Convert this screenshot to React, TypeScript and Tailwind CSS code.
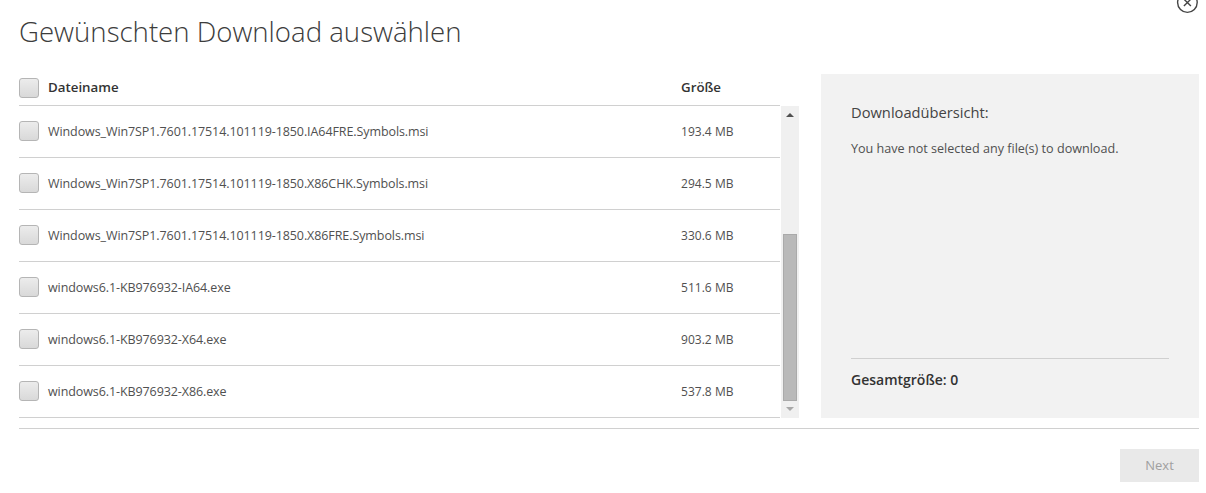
const files = [
  { name: "Windows_Win7SP1.7601.17514.101119-1850.IA64FRE.Symbols.msi", size: "193.4 MB" },
  { name: "Windows_Win7SP1.7601.17514.101119-1850.X86CHK.Symbols.msi", size: "294.5 MB" },
  { name: "Windows_Win7SP1.7601.17514.101119-1850.X86FRE.Symbols.msi", size: "330.6 MB" },
  { name: "windows6.1-KB976932-IA64.exe", size: "511.6 MB" },
  { name: "windows6.1-KB976932-X64.exe", size: "903.2 MB" },
  { name: "windows6.1-KB976932-X86.exe", size: "537.8 MB" },
];

function Box() {
  return (
    <span className="block h-[20px] w-[20px] shrink-0 rounded-[3px] border border-[#b5b5b5] bg-gradient-to-b from-[#ececec] to-[#d9d9d9]" />
  );
}

export default function App() {
  return (
    <div className="relative h-[493px] w-[1206px] overflow-hidden bg-white pl-[19px] pr-[7px] font-['Open_Sans',sans-serif] text-[#505050]">
      <svg className="absolute left-[1176px] top-[-8px]" width="23" height="22" viewBox="0 0 23 22" fill="none" stroke="#444" strokeWidth="1.4">
        <circle cx="11.4" cy="10.6" r="9.8" />
        <path d="M7.9 7.1l7 7M14.9 7.1l-7 7" />
      </svg>

      <h1 className="h-[74px] pt-[10px] text-[27.6px] font-light leading-[42px] text-[#3c3c3c]">
        Gewünschten Download auswählen
      </h1>

      <div className="flex h-[344px] gap-[22px]">
        <div className="w-[780px]">
          <div className="flex h-[32px] w-[761px] items-center border-b border-[#d0d0d0] pb-[3px] text-[13.3px] font-semibold text-[#333]">
            <Box />
            <span className="ml-[9px] w-[633px]">Dateiname</span>
            <span>Größe</span>
          </div>
          <div className="flex h-[312px]">
            <ul className="w-[761px]">
              {files.map((file) => (
                <li key={file.name} className="flex h-[52px] items-center border-b border-[#d0d0d0] pb-px text-[12.5px]">
                  <Box />
                  <span className="ml-[9px] w-[633px] pt-[2px] tracking-[-0.09px]">{file.name}</span>
                  <span className="pt-px text-[12px] tracking-[0.03px]">{file.size}</span>
                </li>
              ))}
            </ul>
            <div className="ml-px flex w-[18px] flex-col items-center bg-[#f0f0f0]">
              <span className="mt-[7px] h-0 w-0 border-x-[4px] border-b-[4px] border-x-transparent border-b-[#505050]" />
              <span className="mt-[117px] h-[167px] w-[14px] border border-[#aaaaaa] bg-[#b9b9b9]" />
              <span className="mt-[6px] h-0 w-0 border-x-[4px] border-t-[4px] border-x-transparent border-t-[#a8a8a8]" />
            </div>
          </div>
        </div>

        <aside className="flex w-[378px] flex-col bg-[#f2f2f2] px-[30px] pt-[27px]">
          <h2 className="text-[14.7px] leading-[22px] text-[#444]">Downloadübersicht:</h2>
          <p className="mt-[17px] text-[12.6px] leading-[18px]">You have not selected any file(s) to download.</p>
          <div className="mt-auto mb-[27px] border-t border-[#d0d0d0] pb-px pt-[11px] text-[14px] font-semibold leading-[20px] text-[#333]">
            Gesamtgröße: 0
          </div>
        </aside>
      </div>

      <div className="mt-[10px] border-t border-[#d0d0d0]" />

      <div className="mt-[20px] flex justify-end">
        <button type="button" className="h-[33px] w-[79px] bg-[#e9e9e9] text-[13px] text-[#a0a0a0]">
          Next
        </button>
      </div>
    </div>
  );
}
